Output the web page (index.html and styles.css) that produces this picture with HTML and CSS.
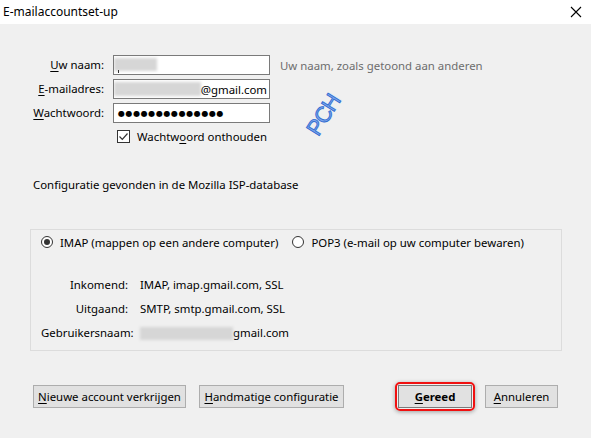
FILE: index.html
```html
<!DOCTYPE html>
<html lang="nl">
<head>
<meta charset="utf-8">
<title>E-mailaccountset-up</title>
<link rel="stylesheet" href="styles.css">
</head>
<body>
<div class="window">
  <div class="titlebar">
    <span class="title">E-mailaccountset-up</span>
    <svg class="close" width="12" height="12" viewBox="0 0 12 12"><path d="M1 1 L11 11 M11 1 L1 11" stroke="#000" stroke-width="1.1" fill="none"/></svg>
  </div>
  <div class="content">
    <div class="form">
      <label class="lbl"><u>U</u>w naam:</label>
      <div class="input"><span class="blur blur-name"></span><span class="caret"></span></div>
      <span class="hint">Uw naam, zoals getoond aan anderen</span>

      <label class="lbl"><u>E</u>-mailadres:</label>
      <div class="input"><span class="blur blur-mail"></span><span class="val">@gmail.com</span></div>
      <span></span>

      <label class="lbl"><u>W</u>achtwoord:</label>
      <div class="input"><span class="dots">●●●●●●●●●●●●●●</span></div>
      <span></span>

      <span></span>
      <label class="check">
        <span class="box"><svg width="11" height="11" viewBox="0 0 11 11"><path d="M1.5 5.5 L4.3 8.3 L9.5 2.5" stroke="#333" stroke-width="1.2" fill="none"/></svg></span>
        <span>Wachtw<u>o</u>ord onthouden</span>
      </label>
      <span></span>
    </div>
    <div class="pch">PCH</div>

    <p class="found">Configuratie gevonden in de Mozilla ISP-database</p>

    <div class="group">
      <div class="radios">
        <label class="radio"><span class="circle on"></span>IMAP (mappen op een andere computer)</label>
        <label class="radio"><span class="circle"></span>POP3 (e-mail op uw computer bewaren)</label>
      </div>
      <div class="details">
        <span class="dl">Inkomend:</span><span class="dv">IMAP, imap.gmail.com, SSL</span>
        <span class="dl">Uitgaand:</span><span class="dv">SMTP, smtp.gmail.com, SSL</span>
        <span class="dl">Gebruikersnaam:</span><span class="dv"><span class="blur blur-user"></span>gmail.com</span>
      </div>
    </div>

    <div class="buttons">
      <div class="left">
        <button class="btn btn-new"><u>N</u>ieuwe account verkrijgen</button>
        <button class="btn btn-man"><u>H</u>andmatige configuratie</button>
      </div>
      <div class="right">
        <span class="ring"><button class="btn btn-ok"><u>G</u>ereed</button></span>
        <button class="btn btn-cancel"><u>A</u>nnuleren</button>
      </div>
    </div>
  </div>
</div>
</body>
</html>
```
FILE: styles.css
```css
* { box-sizing: border-box; }
html, body { margin: 0; padding: 0; }
body {
  width: 591px;
  height: 438px;
  overflow: hidden;
  font-family: "Noto Sans", "Liberation Sans", sans-serif;
  font-size: 11.4px;
  color: #000;
  background: #f0f0f0;
}
u { text-decoration: underline; text-underline-offset: 2px; }
.window { width: 591px; height: 438px; display: flex; flex-direction: column; }
.titlebar {
  height: 24px;
  background: #fff;
  display: flex;
  align-items: center;
  justify-content: space-between;
  padding: 0 9px 0 3px;
  font-size: 12px;
}
.title { line-height: 24px; }
.close { display: block; }
.content {
  position: relative;
  flex: 1;
  background: #f0f0f0;
  padding: 31px 0 0 0;
}
.form {
  display: grid;
  grid-template-columns: 104px 157px auto;
  column-gap: 9px;
  row-gap: 4px;
  align-items: center;
}
.lbl { text-align: right; line-height: 20px; }
.input {
  position: relative;
  height: 20px;
  border: 1px solid #7a7a7a;
  background: #fff;
  display: flex;
  align-items: center;
  justify-content: flex-end;
  padding: 0 2px;
  overflow: hidden;
}
.input .dots { margin-right: auto; padding-left: 2px; font-size: 8px; letter-spacing: 0.6px; font-family: "DejaVu Sans", sans-serif; }
.val { position: relative; }
.hint { color: #6d6d6d; margin-left: 1px; }
.blur {
  position: absolute;
  background: #d6d6d6;
  filter: blur(1.5px);
}
.blur-name { left: 0; top: 2px; width: 43px; height: 13px; }
.caret { position: absolute; left: 4px; top: 14px; width: 1px; height: 3px; background: #333; }
.blur-mail { left: 0; top: 2px; width: 87px; height: 14px; }
.check {
  grid-column: 2 / 4;
  display: flex;
  align-items: center;
  height: 18px;
  margin-left: 4px;
  gap: 7px;
}
.box {
  width: 13px; height: 13px;
  border: 1px solid #333;
  background: #fff;
  display: flex; align-items: center; justify-content: center;
}
.box svg { display: block; }
.pch {
  position: absolute;
  left: 302px;
  top: 78px;
  font-size: 22px;
  font-weight: normal;
  color: #7fa6ea;
  -webkit-text-stroke: 0.9px #2f6cd0;
  text-shadow: 1px 1px 0 #dfe8f8;
  transform: rotate(-58deg);
  letter-spacing: -1px;
  font-family: "Liberation Sans", sans-serif;
}
.found { margin: 28px 0 0 33px; line-height: 16px; }
.group {
  margin: 36px 0 0 30px;
  width: 532px;
  height: 122px;
  border: 1px solid #dcdcdc;
  padding: 3px 0 0 10px;
}
.radios { display: flex; gap: 14px; height: 18px; align-items: center; }
.radio { display: flex; align-items: center; gap: 7px; }
.circle {
  width: 12px; height: 12px;
  border-radius: 50%;
  border: 1px solid #333;
  background: #fff;
  display: flex; align-items: center; justify-content: center;
}
.circle.on::after {
  content: "";
  width: 6px; height: 6px; border-radius: 50%; background: #333;
}
.details {
  margin-top: 26px;
  display: grid;
  grid-template-columns: 87px auto;
  column-gap: 12px;
  row-gap: 8px;
  line-height: 16px;
}
.dl { text-align: right; }
.dv { position: relative; }
.blur-user { position: relative; display: inline-block; vertical-align: middle; width: 93px; height: 13px; left: 0; }
.buttons {
  margin: 31px 0 0 33px;
  width: 525px;
  display: flex;
  justify-content: space-between;
  align-items: center;
}
.left, .right { display: flex; align-items: center; }
.left { gap: 13px; }
.right { gap: 10px; }
.btn {
  font: inherit;
  height: 23px;
  background: #e1e1e1;
  border: 1px solid #adadad;
  padding: 0;
  white-space: nowrap;
  color: #000;
}
.btn-new { width: 153px; }
.btn-man { width: 145px; }
.ring {
  display: flex;
  padding: 1px;
  border: 2px solid #f01010;
  border-radius: 5px;
  box-shadow: 0 1px 4px rgba(0,0,0,0.35);
}
.btn-ok { width: 74px; font-weight: bold; border-color: #7a7a7a; }
.btn-cancel { width: 73px; }
```
